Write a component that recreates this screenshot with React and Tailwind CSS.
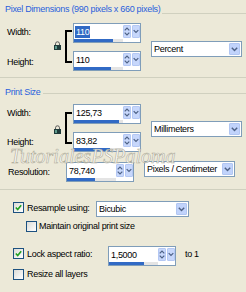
import React from "react";

const Chevron = () => (
  <svg width="7" height="5" viewBox="0 0 7 5">
    <path d="M0.8 0.8 L3.5 3.6 L6.2 0.8" fill="none" stroke="#4d6185" strokeWidth="1.4" />
  </svg>
);

const SpinButtons = () => (
  <div className="flex gap-px pt-px">
    <div className="w-[8px] h-[13px] bg-[#c7d7fb] border border-[#b4c8f4] rounded-[1px] flex items-center justify-center">
      <svg width="6" height="9" viewBox="0 0 6 9">
        <path d="M0.7 3.3 L3 1 L5.3 3.3 M0.7 5.7 L3 8 L5.3 5.7" fill="none" stroke="#4d6185" strokeWidth="1.2" />
      </svg>
    </div>
    <div className="w-[8px] h-[13px] bg-[#c7d7fb] border border-[#b4c8f4] rounded-[1px] flex items-center justify-center">
      <Chevron />
    </div>
  </div>
);

const NumberField = ({ value, fill, selected }) => (
  <div className="w-[68px] h-[20px] border border-[#7f9db9] bg-white flex">
    <div className="flex-1 flex flex-col pt-px">
      <div className="h-[13px] flex items-center pl-px">
        <span
          className={
            selected
              ? "bg-[#316ac5] text-white leading-[12px] px-px"
              : "leading-[12px] px-px"
          }
        >
          {value}
        </span>
      </div>
      <div className="h-[3px] mt-px bg-[#e4e4e4]">
        <div className="h-full bg-[#316ac5]" style={{ width: fill }} />
      </div>
    </div>
    <SpinButtons />
  </div>
);

const Dropdown = ({ label, className }) => (
  <div
    className={
      "h-[16px] border border-[#7f9db9] bg-white flex items-center justify-between pl-[2px] " +
      className
    }
  >
    <span className="leading-[12px]">{label}</span>
    <div className="w-[11px] h-[12px] mr-px bg-[#c1d3fb] border border-[#b1c6f2] rounded-[1px] flex items-center justify-center">
      <Chevron />
    </div>
  </div>
);

const Lock = ({ className }) => (
  <svg className={className} width="7" height="9" viewBox="0 0 7 9">
    <path d="M1.5 4.5 V2.8 a2 2 0 0 1 4 0 V4.5" fill="none" stroke="#5a5a5a" strokeWidth="1" />
    <rect x="0" y="4" width="7" height="5" fill="#1f3b3a" />
    <rect x="1" y="5" width="2" height="3" fill="#5f9a8c" />
  </svg>
);

const CheckBox = ({ checked }) => (
  <div className="w-[11px] h-[11px] border border-[#1c5180] bg-linear-to-br from-[#dcdcd7] to-white flex items-center justify-center shrink-0">
    {checked && (
      <svg width="7" height="7" viewBox="0 0 7 7">
        <path d="M0.8 3.5 L2.7 5.5 L6.2 1.2" fill="none" stroke="#21a121" strokeWidth="1.6" />
      </svg>
    )}
  </div>
);

const App = () => {
  return (
    <div className="w-[246px] h-[292px] bg-[#ece9d8] overflow-hidden font-['Liberation_Sans',Arial,sans-serif] text-[9px] tracking-[-0.3px] text-black">
      {/* Pixel Dimensions */}
      <div className="h-[78px] border-b border-[#d0d0bf]">
        <div className="flex h-[23px]">
          <span className="pl-[5px] mt-[4px] leading-[11px] text-[#2a5fdc]">
            Pixel Dimensions (990 pixels x 660 pixels)
          </span>
          <div className="flex-1 h-px mt-[13px] ml-[2px] bg-[#d0d0bf]" />
        </div>
        <div className="flex h-[49px]">
          <div className="w-[54px] pl-[7px] flex flex-col justify-between py-[4px] leading-[11px]">
            <span>Width:</span>
            <span>Height:</span>
          </div>
          <Lock className="mt-[18px] shrink-0" />
          <div className="w-[7px] h-[33px] mt-[7px] ml-[4px] border-2 border-r-0 border-black" />
          <div className="ml-px flex flex-col gap-[8px]">
            <NumberField value="110" fill={39} selected />
            <NumberField value="110" fill={37} />
          </div>
          <Dropdown label="Percent" className="w-[91px] ml-[10px] mt-[18px]" />
        </div>
      </div>

      {/* Print Size */}
      <div className="h-[112px] border-b border-[#d0d0bf] relative">
        <div className="flex h-[26px]">
          <span className="pl-[5px] mt-[9px] leading-[11px] text-[#2a5fdc]">Print Size</span>
          <div className="flex-1 h-px mt-[15px] ml-[2px] bg-[#d0d0bf]" />
        </div>
        <div className="flex h-[48px]">
          <div className="w-[54px] pl-[7px] flex flex-col justify-between py-[4px] leading-[11px]">
            <span>Width:</span>
            <span>Height:</span>
          </div>
          <Lock className="mt-[21px] shrink-0" />
          <div className="w-[7px] h-[32px] mt-[8px] ml-[4px] border-2 border-r-0 border-black" />
          <div className="ml-px flex flex-col gap-[8px]">
            <NumberField value="125,73" fill={45} />
            <NumberField value="83,82" fill={36} />
          </div>
          <Dropdown label="Millimeters" className="w-[91px] ml-[10px] mt-[17px]" />
        </div>
        <div className="flex mt-[10px] h-[20px]">
          <span className="w-[66px] pl-[8px] leading-[11px] mt-[5px]">Resolution:</span>
          <NumberField value="78,740" fill={28} />
          <Dropdown label="Pixels / Centimeter" className="w-[91px] ml-[10px] -mt-px" />
        </div>
        <span className="absolute left-[10px] top-[69px] font-['Liberation_Serif',serif] italic text-[20px] tracking-[0px] leading-[18px] text-white opacity-90 [-webkit-text-stroke:0.6px_#a9a692] pointer-events-none">
          TutorialesPSPaloma
        </span>
      </div>

      {/* Options */}
      <div className="flex flex-col">
        <div className="flex items-start pl-[13px] mt-[11px] h-[17px]">
          <div className="mt-px">
            <CheckBox checked />
          </div>
          <span className="ml-[3px] w-[69px] mt-[2px] leading-[11px]">Resample using:</span>
          <Dropdown label="Bicubic" className="w-[93px]" />
        </div>
        <div className="flex items-start pl-[26px] mt-[3px] h-[11px]">
          <CheckBox />
          <span className="ml-[2px] leading-[11px]">Maintain original print size</span>
        </div>
        <div className="flex items-start pl-[13px] mt-[14px] h-[20px]">
          <div className="mt-[2px]">
            <CheckBox checked />
          </div>
          <span className="ml-[3px] w-[81px] mt-[3px] leading-[11px]">Lock aspect ratio:</span>
          <NumberField value="1,5000" fill={35} />
          <span className="ml-[9px] mt-[3px] leading-[11px]">to 1</span>
        </div>
        <div className="flex items-start pl-[13px] mt-[3px] h-[11px]">
          <CheckBox />
          <span className="ml-[3px] leading-[11px]">Resize all layers</span>
        </div>
      </div>
    </div>
  );
};

export default App;
